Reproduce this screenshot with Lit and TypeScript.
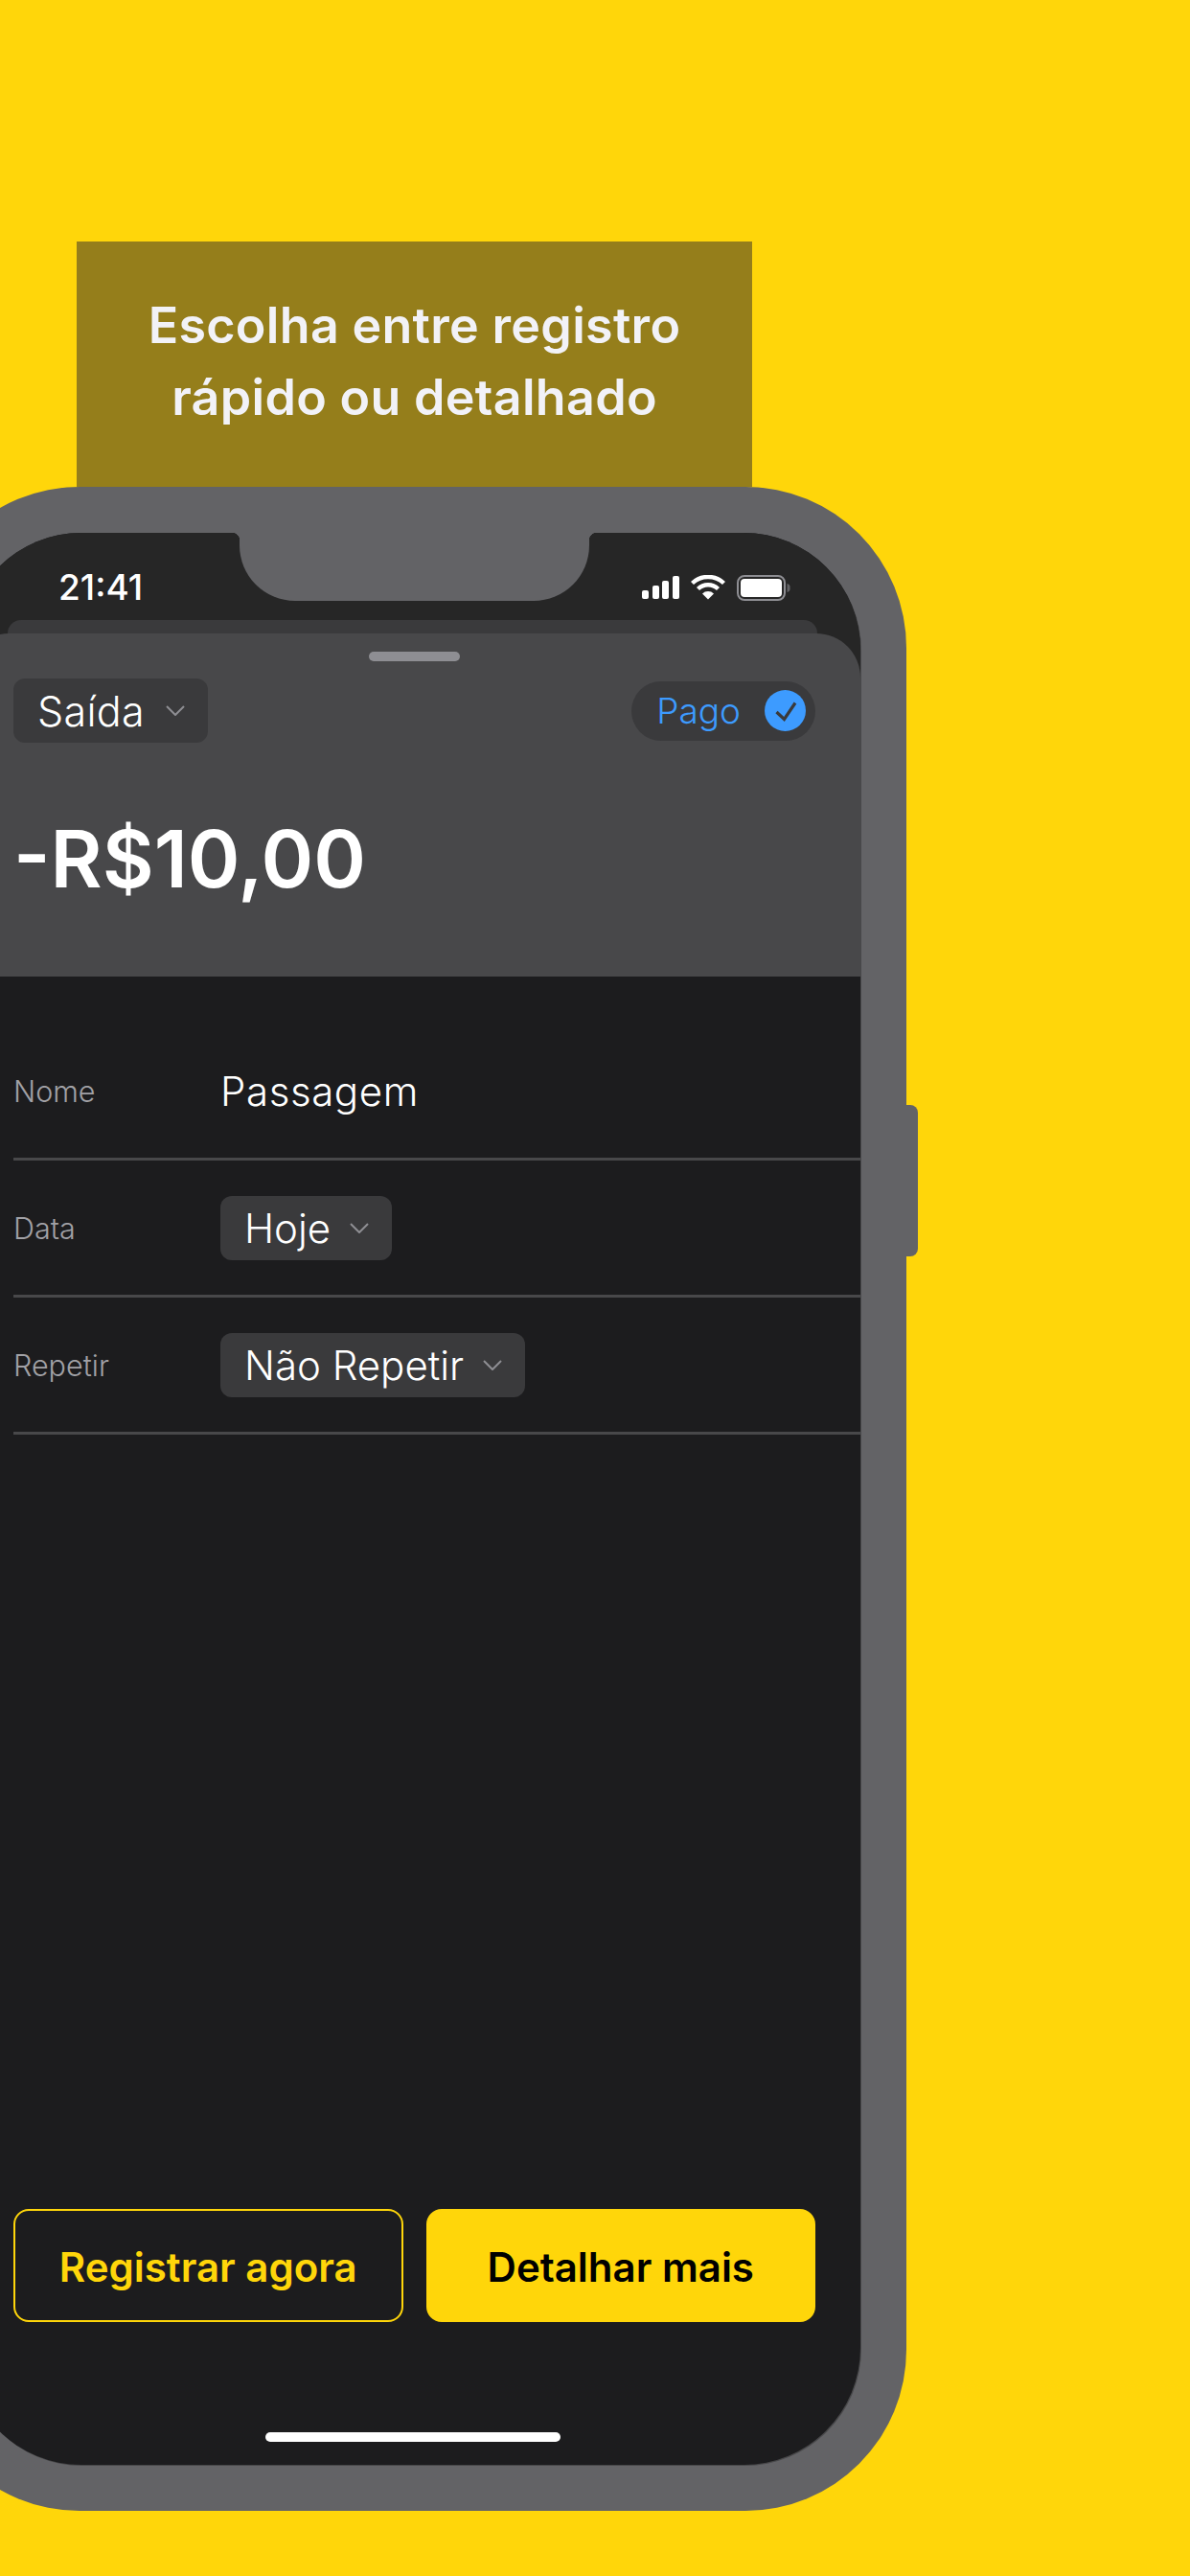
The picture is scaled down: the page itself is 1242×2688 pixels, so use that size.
import { LitElement, html, css } from "lit";
import { customElement } from "lit/decorators.js";

const chevron = html`<svg class="chev" width="20" height="11" viewBox="0 0 20 11" fill="none">
  <path d="M1 1l9 9 9-9" stroke="#8e8e93" stroke-width="2" />
</svg>`;

@customElement("app-root")
export class AppRoot extends LitElement {
  static styles = css`
    :host {
      display: block;
      width: 1242px;
      height: 2688px;
      overflow: hidden;
      background: #ffd60a;
      font-family: Inter, "Open Sans", sans-serif;
    }
    * {
      box-sizing: border-box;
    }
    .page {
      padding-top: 252px;
    }
    .caption {
      margin-left: 80px;
      width: 705px;
      height: 256px;
      padding-bottom: 6px;
      background: #957e1b;
      color: #f2f2f7;
      font-size: 52px;
      font-weight: 600;
      letter-spacing: 0.3px;
      line-height: 75px;
      text-align: center;
      display: flex;
      align-items: center;
      justify-content: center;
    }

    .phone {
      position: relative;
      margin-left: -85px;
      width: 1031px;
      height: 2112px;
      padding: 48px;
      background: #636366;
      border-radius: 168px;
    }
    .side-button {
      position: absolute;
      right: -12px;
      top: 645px;
      width: 14px;
      height: 158px;
      background: #636366;
      border-radius: 0 8px 8px 0;
    }
    .screen {
      position: relative;
      height: 100%;
      display: flex;
      flex-direction: column;
      background: #1c1c1e;
      border-radius: 122px;
      overflow: hidden;
      box-shadow: 1px 1px 0 #48484a;
    }
    .notch {
      position: absolute;
      top: 0;
      left: 287px;
      width: 365px;
      height: 71px;
      background: #636366;
      border-radius: 0 0 58px 58px;
    }
    .notch::before,
    .notch::after {
      content: "";
      position: absolute;
      top: 0;
      width: 8px;
      height: 8px;
    }
    .notch::before {
      left: -8px;
      background: radial-gradient(circle at 0 100%, transparent 8px, #636366 8.5px);
    }
    .notch::after {
      right: -8px;
      background: radial-gradient(circle at 100% 100%, transparent 8px, #636366 8.5px);
    }

    .top {
      background: #262626;
    }
    .status {
      height: 91px;
      padding: 44px 73px 0 98px;
      display: flex;
      justify-content: space-between;
      align-items: flex-start;
      color: #fff;
    }
    .time {
      font-size: 37px;
      font-weight: 500;
      line-height: 26px;
    }
    .status-icons {
      display: flex;
      gap: 12px;
      align-items: flex-start;
    }
    .status-icons svg {
      display: block;
    }
    .sheet-back {
      height: 14px;
      margin: 0 45px;
      background: #3a3a3c;
      border-radius: 30px 30px 0 0;
    }
    .sheet {
      height: 358px;
      padding: 19px 47px 0 51px;
      background: #48484a;
      border-radius: 46px 46px 0 0;
    }
    .handle {
      width: 95px;
      height: 10px;
      margin: 0 auto 18px;
      border-radius: 5px;
      background: #8e8e93;
    }
    .sheet-head {
      display: flex;
      justify-content: space-between;
      align-items: center;
      height: 67px;
    }
    .chip {
      display: inline-flex;
      align-items: center;
      gap: 20px;
      height: 67px;
      padding: 0 24px 0 25px;
      background: #3a3a3c;
      border-radius: 12px;
      color: #fff;
      font-size: 42px;
      font-weight: 300;
    }
    .chip.saida {
      gap: 22px;
      font-size: 43px;
      letter-spacing: 0.3px;
    }
    .pago {
      display: flex;
      align-items: center;
      gap: 25px;
      height: 62px;
      padding: 0 10px 0 26px;
      background: #3a3a3c;
      border-radius: 31px;
      color: #3d9bff;
      font-size: 37px;
      font-weight: 300;
    }
    .check {
      display: block;
    }
    .amount {
      margin-top: 71px;
      color: #fff;
      font-size: 83px;
      font-weight: 600;
      line-height: 100px;
    }

    .form {
      padding: 49px 0 0 51px;
    }
    .row {
      display: flex;
      align-items: center;
      height: 143px;
      border-bottom: 3px solid #48484a;
    }
    .label {
      width: 216px;
      color: #a1a1a6;
      font-size: 30.500px;
      font-weight: 300;
    }
    .value {
      color: #fff;
      font-size: 42px;
      font-weight: 300;
      letter-spacing: 0.6px;
    }

    .actions {
      margin-top: auto;
      display: flex;
      gap: 24px;
      padding: 0 47px 0 51px;
    }
    .btn {
      flex: 1;
      height: 118px;
      padding-top: 2px;
      display: flex;
      align-items: center;
      justify-content: center;
      border: 2px solid #ffd60a;
      border-radius: 16px;
      font-size: 42px;
      font-weight: 600;
    }
    .btn.outline {
      color: #ffd60a;
    }
    .btn.solid {
      background: #ffd60a;
      color: #000;
    }
    .home {
      width: 308px;
      height: 10px;
      margin: 115px auto 24px;
      border-radius: 5px;
      background: #fff;
    }
  `;

  render() {
    return html`
      <div class="page">
        <div class="caption">Escolha entre registro<br />rápido ou detalhado</div>
        <div class="phone">
          <div class="side-button"></div>
          <div class="screen">
            <div class="top">
              <div class="status">
                <span class="time">21:41</span>
                <div class="status-icons">
                  <svg width="39" height="26" viewBox="0 0 39 26" fill="#fff">
                    <rect x="0" y="16" width="7" height="9" rx="2" />
                    <rect x="11" y="11" width="7" height="14" rx="2" />
                    <rect x="21" y="6" width="7" height="19" rx="2" />
                    <rect x="32" y="1" width="7" height="24" rx="2" />
                  </svg>
                  <svg width="36" height="26" viewBox="0 0 36 26" fill="none" stroke="#fff" stroke-width="4.4">
                    <path d="M1.5 8.5A24 24 0 0 1 34.5 8.5" />
                    <path d="M7.5 14.5A15 15 0 0 1 28.5 14.5" />
                    <path d="M18 25.5l-6-6a8.5 8.5 0 0 1 12 0z" fill="#fff" stroke="none" />
                  </svg>
                  <svg width="56" height="27" viewBox="0 0 56 27" fill="none">
                    <rect x="1" y="1" width="49" height="25" rx="7" stroke="#8e8e93" stroke-width="2" />
                    <rect x="4" y="4" width="43" height="19" rx="4" fill="#fff" />
                    <path d="M52.500 9a4 4 0 0 1 3 4.500a4 4 0 0 1-3 4.500z" fill="#636366" />
                  </svg>
                </div>
              </div>
              <div class="sheet-back"></div>
              <div class="sheet">
                <div class="handle"></div>
                <div class="sheet-head">
                  <div class="chip saida">Saída ${chevron}</div>
                  <div class="pago">
                    Pago
                    <svg class="check" width="43" height="43" viewBox="0 0 43 43">
                      <circle cx="21.500" cy="21.500" r="21.500" fill="#3d9bff" />
                      <path d="M12.500 23l8 7.500L32 13.500" fill="none" stroke="#3a3a3c" stroke-width="3.200" />
                    </svg>
                  </div>
                </div>
                <div class="amount">-R$10,00</div>
              </div>
            </div>
            <div class="form">
              <div class="row">
                <span class="label">Nome</span>
                <span class="value">Passagem</span>
              </div>
              <div class="row">
                <span class="label">Data</span>
                <div class="chip">Hoje ${chevron}</div>
              </div>
              <div class="row">
                <span class="label">Repetir</span>
                <div class="chip">Não Repetir ${chevron}</div>
              </div>
            </div>
            <div class="actions">
              <div class="btn outline">Registrar agora</div>
              <div class="btn solid">Detalhar mais</div>
            </div>
            <div class="home"></div>
            <div class="notch"></div>
          </div>
        </div>
      </div>
    `;
  }
}
